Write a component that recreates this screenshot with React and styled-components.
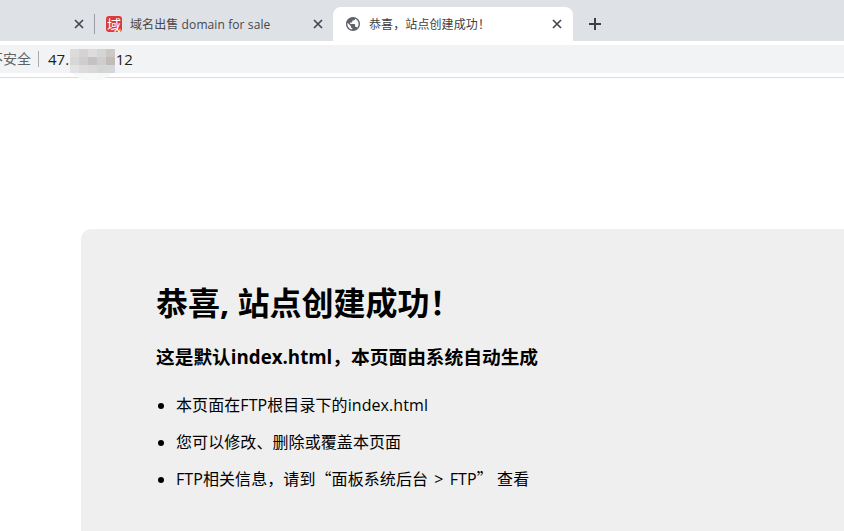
import React from 'react';
import styled, { createGlobalStyle } from 'styled-components';

const GlobalStyle = createGlobalStyle`
  html, body {
    margin: 0;
    padding: 0;
    height: 100%;
    overflow: hidden;
    background: #fff;
  }
  body {
    font-family: "Open Sans", "Noto Sans CJK SC", sans-serif;
  }
`;

const Page = styled.div`
  width: 844px;
  height: 531px;
  overflow: hidden;
  display: flex;
  flex-direction: column;
`;

// Browser tab strip
const TabStrip = styled.div`
  height: 41px;
  flex-shrink: 0;
  background: #dee1e6;
  display: flex;
  align-items: flex-end;
`;

const CutTab = styled.div`
  width: 88px;
  height: 34px;
  padding-right: 4px;
  box-sizing: border-box;
  display: flex;
  align-items: center;
  justify-content: flex-end;
  flex-shrink: 0;
`;

const Divider = styled.div`
  width: 1px;
  height: 20px;
  margin: 0 0 7px 6px;
  background: #9aa0a6;
  flex-shrink: 0;
`;

const Tab = styled.div`
  height: 34px;
  width: ${props => props.$width}px;
  box-sizing: border-box;
  padding: 0 ${props => props.$padRight}px 0 ${props => props.$pad}px;
  display: flex;
  align-items: center;
  flex-shrink: 0;
  border-radius: 8px 8px 0 0;
  background: ${props => (props.$active ? '#fff' : 'transparent')};
`;

const TabTitle = styled.span`
  flex: 1;
  margin-left: ${props => props.$gap}px;
  font-size: 12px;
  color: ${props => (props.$active ? '#3c4043' : '#45484d')};
  white-space: nowrap;
  letter-spacing: 0.1px;
`;

const Favicon = styled.div`
  width: 16px;
  height: 16px;
  border-radius: 3px;
  background: #dc3a3a;
  color: #fff;
  font-size: 14px;
  line-height: 16px;
  text-align: center;
  flex-shrink: 0;
  font-family: "Noto Sans CJK SC", sans-serif;
`;

const NewTabIcon = styled.svg`
  width: 14px;
  height: 14px;
  margin: 0 0 10px 15px;
  flex-shrink: 0;
`;

// White band that holds the address bar
const ToolbarBand = styled.div`
  height: 37px;
  flex-shrink: 0;
  box-sizing: border-box;
  padding-top: 4px;
  border-bottom: 1px solid #dcdcdc;
  background: #fff;
`;

const AddressBar = styled.div`
  position: relative;
  height: 28px;
  background: #f1f3f4;
  display: flex;
  align-items: center;
`;

const Security = styled.span`
  margin-left: -11px;
  width: 48px;
  font-size: 14px;
  line-height: 28px;
  color: #5f6368;
  white-space: nowrap;
  flex-shrink: 0;
`;

const Separator = styled.div`
  width: 1px;
  height: 16px;
  margin-left: 1px;
  background: #a8abaf;
`;

const Url = styled.span`
  margin-left: 9px;
  font-size: 15px;
  color: #202124;
  white-space: nowrap;
  display: flex;
`;

const UrlGap = styled.span`
  width: 38px;
`;

const Mosaic = styled.svg`
  position: absolute;
  left: 68px;
  top: 4px;
  width: 48px;
  height: 32px;
`;

const Content = styled.main`
  flex: 1;
  padding: 151px 0 0 81px;
`;

const Card = styled.section`
  height: 400px;
  box-sizing: border-box;
  padding: 52px 0 0 75px;
  background: #efefef;
  border-radius: 10px 0 0 0;
  color: #000;
`;

const Title = styled.h1`
  margin: 0;
  font-size: 32px;
  line-height: 44px;
  font-weight: 700;
  white-space: nowrap;
`;

const Subtitle = styled.h2`
  margin: 19px 0 0;
  font-size: 18.72px;
  line-height: 26px;
  font-weight: 700;
  white-space: nowrap;
`;

const Notes = styled.ul`
  margin: 24px 0 0;
  padding: 0 0 0 20px;
  list-style: disc;
`;

const Note = styled.li`
  font-size: 16px;
  line-height: 22px;
  margin-bottom: 15px;
  white-space: pre;
  letter-spacing: 0.08px;
`;

// Curly quotes take the full-width CJK form
const Quote = styled.span`
  font-family: "Noto Sans CJK SC", sans-serif;
  line-height: 0;
`;

const WideSpaced = styled.span`
  word-spacing: 2px;
`;

const CloseIcon = ({ color = '#45484d' }) => (
  <svg width="10" height="10" viewBox="0 0 10 10" style={{ flexShrink: 0 }}>
    <path d="M1 1l8 8M9 1l-8 8" stroke={color} strokeWidth="1.7" fill="none" />
  </svg>
);

const GlobeIcon = () => (
  <svg width="14" height="14" viewBox="0 0 24 24" style={{ flexShrink: 0 }}>
    <path
      fill="#5f6368"
      d="M12 0C5.37 0 0 5.37 0 12s5.37 12 12 12 12-5.37 12-12S18.63 0 12 0zM10.8 21.5C6.1 20.9 2.4 16.9 2.4 12c0-.74.1-1.45.25-2.14L8.4 15.6v1.2c0 1.32 1.08 2.4 2.4 2.4v2.3zm8.28-3.05c-.31-.97-1.2-1.65-2.28-1.65h-1.2v-3.6c0-.66-.54-1.2-1.2-1.2H7.2V9.6h2.4c.66 0 1.2-.54 1.2-1.2V6h2.4c1.32 0 2.4-1.08 2.4-2.4v-.49c3.52 1.42 6 4.87 6 8.89 0 2.5-.96 4.77-2.52 6.45z"
    />
  </svg>
);

const mosaicCells = [
  [2, 0, 9, '#dcdcdd'], [11, 0, 9, '#d5d3d3'], [20, 0, 9, '#dedcdc'], [29, 0, 9, '#d6d5d5'], [38, 0, 9, '#cdc8c6'],
  [2, 8, 9, '#d8d7d7'], [11, 8, 9, '#cfcdcd'], [20, 8, 9, '#c4c2c2'], [29, 8, 9, '#cfcdcd'], [38, 8, 9, '#c2bcb9'],
  [2, 16, 9, '#e2e3e4'], [11, 16, 9, '#dcdcdc'], [20, 16, 9, '#d9d9da'], [29, 16, 9, '#d5d5d6'], [38, 16, 9, '#d3d6da'],
];

function App() {
  return (
    <Page>
      <GlobalStyle />
      <TabStrip>
        <CutTab>
          <CloseIcon />
        </CutTab>
        <Divider />
        <Tab $width={238} $pad={11} $padRight={10}>
          <Favicon>域</Favicon>
          <TabTitle $gap={8}>域名出售 domain for sale</TabTitle>
          <CloseIcon />
        </Tab>
        <Tab $active $width={240} $pad={13} $padRight={11}>
          <GlobeIcon />
          <TabTitle $active $gap={9}>恭喜，站点创建成功！</TabTitle>
          <CloseIcon />
        </Tab>
        <NewTabIcon viewBox="0 0 14 14">
          <path d="M7 1v12M1 7h12" stroke="#3c4043" strokeWidth="2" fill="none" />
        </NewTabIcon>
      </TabStrip>
      <ToolbarBand>
        <AddressBar>
          <Security>不安全</Security>
          <Separator />
          <Url>
            <span>47.1</span>
            <UrlGap />
            <span>12</span>
          </Url>
          <Mosaic viewBox="0 0 48 32">
            {mosaicCells.map(([x, y, size, fill], index) => (
              <rect key={index} x={x} y={y} width={size} height="8" fill={fill} />
            ))}
            <path d="M4 24h40c-3 3-7 5-11 7H15c-4-2-8-4-11-7z" fill="#f7f8f8" />
          </Mosaic>
        </AddressBar>
      </ToolbarBand>
      <Content>
        <Card>
          <Title>恭喜, 站点创建成功！</Title>
          <Subtitle>这是默认index.html，本页面由系统自动生成</Subtitle>
          <Notes>
            <Note>本页面在FTP根目录下的index.html</Note>
            <Note>您可以修改、删除或覆盖本页面</Note>
            <Note>FTP相关信息，请到<Quote>“</Quote>面板系统后台<WideSpaced> &gt; </WideSpaced>FTP<Quote>”</Quote> 查看</Note>
          </Notes>
        </Card>
      </Content>
    </Page>
  );
}

export default App;
